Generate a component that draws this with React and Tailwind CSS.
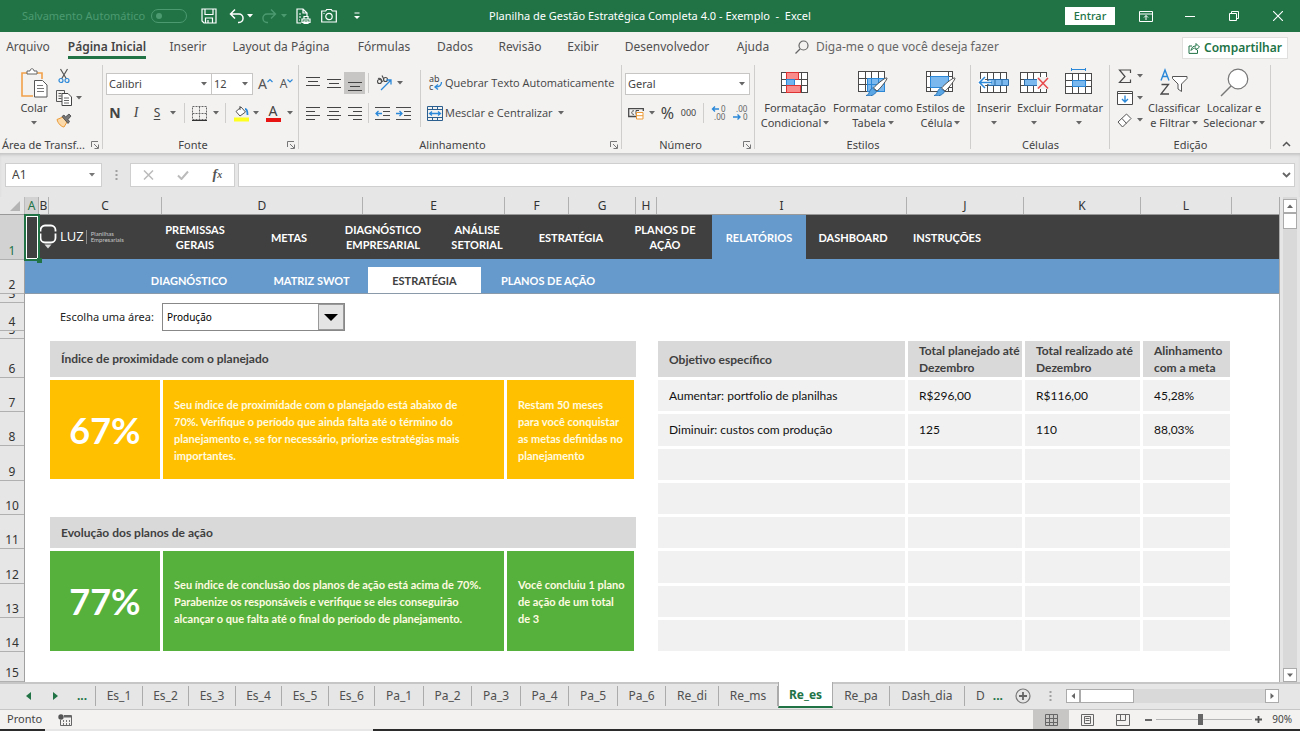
import React from 'react';
import clsx from 'clsx';

const Caret = ({ className = 'text-[#666]' }) => (
  <svg width="6" height="4" viewBox="0 0 6 4" className={clsx('shrink-0', className)}>
    <path d="M0 0h6L3 3.5z" fill="currentColor" />
  </svg>
);

const Svg = ({ w = 16, h = 16, children, className }) => (
  <svg
    width={w}
    height={h}
    viewBox={`0 0 ${w} ${h}`}
    fill="none"
    stroke="#4a4a4a"
    strokeWidth="1"
    className={clsx('shrink-0', className)}
  >
    {children}
  </svg>
);

const IconButton = ({ label, className, children }) => (
  <button type="button" aria-label={label} className={clsx('flex items-center justify-center shrink-0', className)}>
    {children}
  </button>
);

const Separator = ({ className }) => <div className={clsx('w-px shrink-0', className)} />;

/* ---------- title bar ---------- */

const TitleBar = () => (
  <header className="grid h-8 grid-cols-[1fr_auto_1fr] items-center bg-[#217346] text-[11px] text-white">
    <div className="flex items-center pl-[22px]">
      <label htmlFor="autosave" className="w-[129px] whitespace-nowrap text-[#4c9a70]">
        Salvamento Automático
      </label>
      <span className="relative flex h-[14px] w-9 items-center rounded-full border border-[#4c9a70] px-1">
        <input id="autosave" type="checkbox" className="absolute inset-0 opacity-0" />
        <span className="h-[6px] w-[6px] rounded-full bg-[#4c9a70]" />
      </span>
      <IconButton label="Salvar" className="ml-3 w-5">
        <Svg w={16} h={16}>
          <g stroke="#fff" strokeWidth="1.2">
            <path d="M1 1h14v14H3l-2-2z" />
            <path d="M4 1v5.500h8V1M4.500 15v-5h7v5M7 12v3" />
          </g>
        </Svg>
      </IconButton>
      <IconButton label="Desfazer" className="ml-2 w-5">
        <Svg w={16} h={16}>
          <path d="M6 1.500L1.500 6 6 10.500M1.500 6H10a4 4.200 0 0 1 0 8.500H9" stroke="#fff" strokeWidth="1.5" />
        </Svg>
      </IconButton>
      <Caret className="text-white" />
      <IconButton label="Refazer" className="ml-[6px] w-5">
        <Svg w={16} h={16}>
          <path d="M10 1.500L14.500 6 10 10.500M14.500 6H6a4 4.200 0 0 0 0 8.500h1" stroke="#4c9a70" strokeWidth="1.4" />
        </Svg>
      </IconButton>
      <Caret className="ml-[2px] text-[#4c9a70]" />
      <IconButton label="Visualizar impressão" className="w-8">
        <Svg w={16} h={16}>
          <g stroke="#fff" strokeWidth="1.2">
            <path d="M6 15H2V1h6l4 4v3M8 1v4h4" />
            <path d="M4 6h2M4 9h2M4 12h1" />
            <path d="M7 11h8v3.500H7zM9 11V8.500h4V11M9 13h4v2.500H9z" />
          </g>
        </Svg>
      </IconButton>
      <IconButton label="Câmera" className="w-5">
        <Svg w={16} h={16}>
          <g stroke="#fff" strokeWidth="1.2">
            <path d="M.7 3h4l1-1.500h4.600l1 1.500h4v11H.7z" />
            <circle cx="8" cy="8.500" r="3.200" />
            <path d="M2.500 5.500h1" />
          </g>
        </Svg>
      </IconButton>
      <IconButton label="Personalizar barra" className="ml-2 w-5">
        <Svg w={8} h={8}>
          <path d="M1.500 1h5" stroke="#fff" />
          <path d="M1 4h6L4 7z" fill="#fff" stroke="none" />
        </Svg>
      </IconButton>
    </div>
    <h1 className="whitespace-pre">Planilha de Gestão Estratégica Completa 4.0 - Exemplo  -  Excel</h1>
    <div className="flex items-center justify-end">
      <button type="button" className="mr-[9px] h-[18px] w-[50px] bg-white leading-[18px] font-medium text-[#217346]">
        Entrar
      </button>
      <IconButton label="Opções da faixa" className="h-8 w-11">
        <Svg w={14} h={12}>
          <g stroke="#fff">
            <path d="M.5 1.500h13v10H.5zM.5 4h13" />
            <path d="M7 10V5.500M5 7.500l2-2 2 2" />
          </g>
        </Svg>
      </IconButton>
      <IconButton label="Minimizar" className="h-8 w-11">
        <Svg w={10} h={10}>
          <path d="M0 5.500h10" stroke="#fff" />
        </Svg>
      </IconButton>
      <IconButton label="Restaurar" className="h-8 w-11">
        <Svg w={10} h={10}>
          <path d="M.5 2.500h7v7h-7zM2.500 2.500v-2h7v7h-2" stroke="#fff" />
        </Svg>
      </IconButton>
      <IconButton label="Fechar" className="h-8 w-11">
        <Svg w={10} h={10}>
          <path d="M0 0l10 10M10 0L0 10" stroke="#fff" strokeWidth="1.1" />
        </Svg>
      </IconButton>
    </div>
  </header>
);

/* ---------- ribbon tabs ---------- */

const ribbonTabs = [
  { name: 'Arquivo', width: 'w-14' },
  { name: 'Página Inicial', width: 'w-[102px]', active: true },
  { name: 'Inserir', width: 'w-[60px]' },
  { name: 'Layout da Página', width: 'w-[126px]' },
  { name: 'Fórmulas', width: 'w-20' },
  { name: 'Dados', width: 'w-[62px]' },
  { name: 'Revisão', width: 'w-[68px]' },
  { name: 'Exibir', width: 'w-[58px]' },
  { name: 'Desenvolvedor', width: 'w-[110px]' },
  { name: 'Ajuda', width: 'w-[62px]' },
];

const RibbonTabs = () => (
  <nav className="flex h-8 items-center text-xs text-[#505050]">
    {ribbonTabs.map((tab) => (
      <button key={tab.name} type="button" className={clsx('flex h-full shrink-0 justify-center whitespace-nowrap', tab.width)}>
        <span
          className={clsx(
            'h-[27px] pt-1 leading-[22px]',
            tab.active && 'border-b-[3px] border-[#217346] font-semibold text-[#444]'
          )}
        >
          {tab.name}
        </span>
      </button>
    ))}
    <button type="button" className="flex h-full items-start gap-[7px] pl-[11px] text-[#666]">
      <Svg w={14} h={14} className="mt-2">
        <circle cx="8.500" cy="5.500" r="4.500" stroke="#666" strokeWidth="1.2" />
        <path d="M5 9L.5 13.500" stroke="#666" strokeWidth="1.2" />
      </Svg>
      <span className="whitespace-nowrap pt-1 leading-[22px]">Diga-me o que você deseja fazer</span>
    </button>
    <button
      type="button"
      className="ml-auto mr-3 flex h-[22px] w-[106px] items-center justify-center gap-1 border border-[#e1dfdd] bg-white font-semibold text-[#217346]"
    >
      <Svg w={12} h={12}>
        <path d="M4 4H1v7.400h8.500V8M3 8.500C3.500 5.500 5 4 8 4V1.500L11.500 5 8 8V6C6 6 4.500 6.500 3 8.500z" stroke="#217346" />
      </Svg>
      Compartilhar
    </button>
  </nav>
);

/* ---------- ribbon ---------- */

const Launcher = ({ label }) => (
  <IconButton label={`Opções de ${label}`} className="absolute right-1 bottom-1">
    <Svg w={8} h={8}>
      <path d="M.5 6V.5H7M3 3l4 4M7.500 3.500v4h-4" stroke="#777" />
    </Svg>
  </IconButton>
);

const Group = ({ label, launcher, className, children }) => (
  <section
    className={clsx(
      'relative flex shrink-0 flex-col text-[11px] text-[#444]',
      'after:absolute after:top-0 after:right-0 after:bottom-1 after:w-px after:bg-[#d0cecc]',
      className
    )}
  >
    <div className="flex h-[73px] shrink-0">{children}</div>
    <h2 className={clsx('text-center leading-[14px]', launcher && 'pr-4')}>{label}</h2>
    {launcher && <Launcher label={label} />}
  </section>
);

const BigButton = ({ icon, lines, caretBelow, className }) => (
  <button type="button" className={clsx('flex shrink-0 flex-col items-center whitespace-nowrap', className)}>
    <span className="flex h-[35px] items-center">{icon}</span>
    <span className="leading-[15px]">{lines[0]}</span>
    {caretBelow ? (
      <span className="flex h-[15px] items-center">
        <Caret />
      </span>
    ) : (
      <span className="flex items-center gap-[2px] leading-[15px]">
        {lines[1]} <Caret />
      </span>
    )}
  </button>
);

const GridBase = () => (
  <>
    <rect x=".5" y="2.500" width="26" height="20" fill="#fff" />
    <path d="M7.500 2.500v20M20.500 2.500v20M.5 9.500h26M.5 15.500h26M13.500 2.500v20" />
  </>
);

const Brush = () => (
  <>
    <path d="M8 26.500c3.500 0 2.500-5 6.500-7.500l4 3.500c-2 4-6.500 5-10.500 4z" fill="#5aa5e4" stroke="#2673b8" />
    <path d="M29 9c.8.800-6.500 10.500-10 13l-3.500-3C19 15 27.500 8 29 9z" fill="#fff" stroke="#555" />
  </>
);

const PasteIcon = () => (
  <Svg w={28} h={30}>
    <path d="M7 5H2v23h11M17 5h5v6" stroke="#f2a04a" strokeWidth="1.6" />
    <path d="M7 6V3h3c0-3 4-3 4 0h3v3z" fill="#fff" stroke="#666" />
    <path d="M14.500 12.500h8l4.500 4.500v12H14.500z" fill="#fff" stroke="#555" />
    <path d="M17 17.500h6M17 20.500h7M17 23.500h7" stroke="#777" />
  </Svg>
);

const AlignIcon = ({ rows }) => (
  <Svg w={14} h={15}>
    {rows.map(([x1, x2, y]) => (
      <path key={y} d={`M${x1} ${y}H${x2}`} stroke="#444" />
    ))}
  </Svg>
);

const alignTop = [[0, 14, 1.5], [2, 12, 5.5], [0, 14, 9.5]];
const alignMiddle = [[0, 14, 3.5], [2, 12, 7.5], [0, 14, 11.5]];
const alignBottom = [[0, 14, 6.5], [2, 12, 10.5], [0, 14, 14.5]];
const alignLeft = [[0, 14, 1.5], [0, 9, 5.5], [0, 14, 9.5], [0, 9, 13.5]];
const alignCenter = [[0, 14, 1.5], [2, 12, 5.5], [0, 14, 9.5], [2, 12, 13.5]];
const alignRight = [[0, 14, 1.5], [5, 14, 5.5], [0, 14, 9.5], [5, 14, 13.5]];

const IndentIcon = ({ back }) => (
  <Svg w={15} h={13}>
    <path d="M0 .5h15M8 4.500h7M8 8.500h7M0 12.500h15" />
    <path d={back ? 'M7 6.500H1M3.500 4L1 6.500 3.500 9' : 'M0 6.500h6M3.500 4L6 6.500 3.500 9'} stroke="#2b88d8" strokeWidth="1.3" />
  </Svg>
);

const DecimalIcon = ({ more }) => (
  <Svg w={16} h={16}>
    <g fill="#666" stroke="none" fontSize="8" fontFamily="Noto Sans">
      <text x={more ? 10 : 4} y="7">{more ? '0' : '.00'}</text>
      <text x={more ? 3 : 11} y="15">{more ? '.00' : '0'}</text>
    </g>
    <path
      d={more ? 'M8 4H1.500M4 1.500L1.500 4 4 6.500' : 'M1 12h7M5.500 9.500L8 12l-2.500 2.500'}
      stroke="#2b88d8"
      strokeWidth="1.4"
    />
  </Svg>
);

const ComboBox = ({ label, value, className }) => (
  <span className={clsx('relative flex h-[22px] shrink-0 items-center border border-[#c8c6c4] bg-white', className)}>
    <select aria-label={label} defaultValue={value} className="h-full w-full appearance-none pl-[2px] text-[11px] text-[#444] outline-none">
      <option>{value}</option>
    </select>
    <Caret className="pointer-events-none absolute right-1 text-[#666]" />
  </span>
);

const ClipboardGroup = () => (
  <Group label="Área de Transf..." launcher className="w-[103px]">
    <BigButton className="ml-[14px] w-10" icon={<PasteIcon />} lines={['Colar']} caretBelow />
    <div className="flex flex-col">
      <IconButton label="Recortar" className="h-[22px] w-5">
        <Svg w={12} h={16}>
          <path d="M2.500 1L8.500 11M9.500 1L3.500 11" stroke="#555" strokeWidth="1.2" />
          <circle cx="3" cy="12.500" r="2" stroke="#2b88d8" strokeWidth="1.2" />
          <circle cx="9" cy="12.500" r="2" stroke="#2b88d8" strokeWidth="1.2" />
        </Svg>
      </IconButton>
      <div className="flex h-[22px] items-center gap-[2px]">
        <IconButton label="Copiar" className="w-5">
          <Svg w={16} h={16}>
            <path d="M.5.5h8v11h-8zM2.500 3.500h3M2.500 6h3M2.500 8.500h3" stroke="#555" />
            <path d="M6 3.500h6l3.500 3.500v8.500H6z" fill="#fff" stroke="#444" />
            <path d="M8 8h5M8 10.500h5M8 13h5" stroke="#666" />
          </Svg>
        </IconButton>
        <Caret />
      </div>
      <IconButton label="Pincel de formatação" className="h-[22px] w-5">
        <Svg w={16} h={15}>
          <path d="M1 6.500L7 4l4 5-3 5C6 14 2 11 1 6.500z" fill="#fbd9a8" stroke="#ed9a36" />
          <path d="M6 3.500l6 7 1.500-2L12 6.500 15 3 13 1 9.500 4 8 2z" fill="#777" stroke="#444" strokeWidth=".8" />
        </Svg>
      </IconButton>
    </div>
  </Group>
);

const FontGroup = () => (
  <Group label="Fonte" launcher className="w-[196px]">
    <div className="flex flex-col pl-[3px]">
      <div className="mt-2 flex items-center">
        <ComboBox label="Fonte" value="Calibri" className="w-[106px]" />
        <ComboBox label="Tamanho da fonte" value="12" className="w-[41px] border-l-0" />
        <IconButton label="Aumentar fonte" className="ml-[2px] w-[21px] text-sm text-[#555]">
          A<Svg w={6} h={12}><path d="M.5 4L3 1.500 5.500 4" stroke="#2b88d8" strokeWidth="1.2" /></Svg>
        </IconButton>
        <IconButton label="Diminuir fonte" className="w-[21px] text-xs text-[#555]">
          A<Svg w={6} h={12}><path d="M.5 1.500L3 4l2.500-2.500" stroke="#2b88d8" strokeWidth="1.2" /></Svg>
        </IconButton>
      </div>
      <div className="mt-2 flex h-5 items-center text-sm">
        <IconButton label="Negrito" className="w-[18px] font-bold">N</IconButton>
        <IconButton label="Itálico" className="w-6 font-['Liberation_Serif',serif] italic">I</IconButton>
        <IconButton label="Sublinhado" className="w-[18px] text-xs underline underline-offset-2">S</IconButton>
        <IconButton label="Mais sublinhados" className="w-[14px]"><Caret /></IconButton>
        <Separator className="mx-1 h-5 bg-[#d0cecc]" />
        <IconButton label="Bordas" className="w-[21px]">
          <Svg w={15} h={15}>
            <path d="M.5.5h14v13H.5zM7.500.5v13M.5 7.500h14" stroke="#666" strokeDasharray="2 1" />
            <path d="M0 14.500h15" stroke="#333" />
          </Svg>
        </IconButton>
        <IconButton label="Mais bordas" className="w-[11px]"><Caret /></IconButton>
        <Separator className="mx-1 h-5 bg-[#d0cecc]" />
        <IconButton label="Cor de preenchimento" className="w-[22px]">
          <Svg w={17} h={17}>
            <path d="M3 6.500L8 2l4.500 5L7 11z" fill="#fff" stroke="#555" />
            <path d="M7 1v4" stroke="#555" />
            <path d="M12 4c2 0 2.500 3 2.500 6" stroke="#2b88d8" strokeWidth="1.8" />
            <rect x="1" y="12.500" width="15" height="4" fill="#ffff1f" stroke="none" />
          </Svg>
        </IconButton>
        <IconButton label="Mais cores de preenchimento" className="w-2"><Caret /></IconButton>
        <IconButton label="Cor da fonte" className="w-[26px] flex-col">
          <span className="leading-[14px]">A</span>
          <span className="h-1 w-[15px] bg-[#e81313]" />
        </IconButton>
        <IconButton label="Mais cores da fonte" className="w-2"><Caret /></IconButton>
      </div>
    </div>
  </Group>
);

const AlignmentGroup = () => (
  <Group label="Alinhamento" launcher className="w-[323px]">
    <div className="flex flex-col pl-[3px]">
      <div className="mt-[7px] flex h-[22px] items-center">
        <IconButton label="Alinhar em cima" className="h-full w-[21px]"><AlignIcon rows={alignTop} /></IconButton>
        <IconButton label="Alinhar no meio" className="h-full w-[21px]"><AlignIcon rows={alignMiddle} /></IconButton>
        <IconButton label="Alinhar embaixo" className="h-full w-[21px] bg-[#c8c6c4]"><AlignIcon rows={alignBottom} /></IconButton>
        <Separator className="mx-[3px] h-5 bg-[#d0cecc]" />
        <IconButton label="Orientação" className="w-6">
          <Svg w={17} h={16}>
            <g strokeWidth="1.100">
              <circle cx="3.500" cy="6.500" r="2" />
              <path d="M2 3.500c2-1 3.500.5 4.500 3.500" />
              <circle cx="9.500" cy="4.500" r="2" />
              <path d="M6 .5l2 4" />
            </g>
            <path d="M5 15L14.500 5.500M10.500 5h4.500v4.500" stroke="#2b88d8" strokeWidth="1.3" />
          </Svg>
        </IconButton>
        <IconButton label="Mais orientações" className="w-2"><Caret /></IconButton>
      </div>
      <div className="mt-[9px] flex h-5 items-center">
        <IconButton label="Alinhar à esquerda" className="w-[21px]"><AlignIcon rows={alignLeft} /></IconButton>
        <IconButton label="Centralizar" className="w-[21px]"><AlignIcon rows={alignCenter} /></IconButton>
        <IconButton label="Alinhar à direita" className="w-[21px]"><AlignIcon rows={alignRight} /></IconButton>
        <Separator className="mx-[3px] h-5 bg-[#d0cecc]" />
        <IconButton label="Diminuir recuo" className="w-[21px]"><IndentIcon back /></IconButton>
        <IconButton label="Aumentar recuo" className="w-[21px]"><IndentIcon /></IconButton>
      </div>
    </div>
    <Separator className="mt-[5px] ml-[6px] h-[57px] bg-[#d0cecc]" />
    <div className="flex flex-col pl-[6px]">
      <button type="button" className="mt-[7px] flex h-[22px] items-center gap-[2px] font-['Open_Sans',sans-serif] whitespace-nowrap">
        <Svg w={16} h={16}>
          <g fontSize="9" fill="#444" stroke="none" fontFamily="Noto Sans">
            <text x="2" y="7">ab</text>
            <text x="2" y="15">c</text>
          </g>
          <path d="M14.500 7c0 4-2 5-6 5M11 9.500L8 12l3 2.500" stroke="#2b88d8" strokeWidth="1.3" />
        </Svg>
        Quebrar Texto Automaticamente
      </button>
      <div className="mt-[9px] flex h-5 items-center">
        <button type="button" className="flex items-center gap-[2px] font-['Open_Sans',sans-serif] whitespace-nowrap">
          <Svg w={16} h={15}>
            <path d="M.5.5h15v14H.5zM.5 3.500h15M.5 11.500h15M5.500.5v3M10.500.5v3M5.500 11.500v3M10.500 11.500v3" stroke="#2a5f8f" />
            <path d="M2.500 7.500h11M5 5.500l-2.500 2L5 9.500M11 5.500l2.500 2-2.500 2" stroke="#2b88d8" strokeWidth="1.3" />
          </Svg>
          Mesclar e Centralizar
        </button>
        <IconButton label="Mais opções de mesclagem" className="w-4"><Caret /></IconButton>
      </div>
    </div>
  </Group>
);

const NumberGroup = () => (
  <Group label="Número" launcher className="w-[133px]">
    <div className="flex flex-col pl-[3px]">
      <ComboBox label="Formato do número" value="Geral" className="mt-2 w-[125px]" />
      <div className="mt-2 flex h-5 items-center">
        <IconButton label="Formato de contabilização" className="w-[22px]">
          <Svg w={16} h={14}>
            <path d="M8 10.500H.7V2.700h14.600V5" strokeWidth="1.3" />
            <path d="M6 4.800c-3-.5-3 4 0 3.600M8 8.500v-4h3" />
            <path d="M8.500 6.500h6.500v6.500H8.500zM8.500 9.700h6.500" fill="#fff" stroke="#ed9a36" />
          </Svg>
        </IconButton>
        <IconButton label="Mais formatos" className="w-[10px]"><Caret /></IconButton>
        <IconButton label="Porcentagem" className="w-[21px] text-base">%</IconButton>
        <IconButton label="Separador de milhares" className="w-[21px] text-[9px]">000</IconButton>
        <Separator className="mx-1 h-5 bg-[#d0cecc]" />
        <IconButton label="Aumentar casas decimais" className="w-[21px]"><DecimalIcon more /></IconButton>
        <IconButton label="Diminuir casas decimais" className="w-[21px]"><DecimalIcon /></IconButton>
      </div>
    </div>
  </Group>
);

const StylesGroup = () => (
  <Group label="Estilos" className="w-[216px]">
    <BigButton
      className="w-20"
      lines={['Formatação', 'Condicional']}
      icon={
        <Svg w={28} h={25}>
          <GridBase />
          <rect x="5.500" y="2.500" width="12" height="7" fill="#f98b8b" stroke="#d33" />
          <rect x="5.500" y="9.500" width="8" height="6" fill="#6fb4ee" stroke="#2b88d8" />
          <rect x="5.500" y="15.500" width="14" height="7" fill="#f98b8b" stroke="#d33" />
        </Svg>
      }
    />
    <BigButton
      className="w-[76px]"
      lines={['Formatar como', 'Tabela']}
      icon={
        <Svg w={30} h={27}>
          <GridBase />
          <path d="M9.500 9.500h17v13h-17z" fill="#7ab8ee" stroke="#2b88d8" />
          <path d="M13.500 9.500v13M20.500 9.500v13M9.500 15.500h17" stroke="#2b88d8" />
          <Brush />
        </Svg>
      }
    />
    <BigButton
      className="w-[59px]"
      lines={['Estilos de', 'Célula']}
      icon={
        <Svg w={30} h={27}>
          <rect x=".5" y="2.500" width="26" height="20" fill="#fff" />
          <path d="M4.500 2.500v20M22.500 2.500v20M.5 7.500h26M.5 18.500h26" />
          <path d="M4.500 7.500h18v11h-18z" fill="#7ab8ee" stroke="#2b88d8" />
          <Brush />
        </Svg>
      }
    />
  </Group>
);

const CellsGroup = () => (
  <Group label="Células" className="w-[139px]">
    <BigButton
      className="ml-[3px] w-10"
      lines={['Inserir']}
      caretBelow
      icon={
        <Svg w={32} h={25}>
          <g transform="translate(2 0)"><GridBase /></g>
          <path d="M10.500 9.500h20v6h-20zM17 9.500v6M24 9.500v6" fill="#7ab8ee" stroke="#2b6ca8" />
          <path d="M13 12.500H1.500M7 7l-5.500 5.500L7 18" stroke="#fff" strokeWidth="3.500" />
          <path d="M14 12.500H1.500M7 7l-5.500 5.500L7 18" stroke="#2b88d8" strokeWidth="1.500" />
        </Svg>
      }
    />
    <BigButton
      className="w-10"
      lines={['Excluir']}
      caretBelow
      icon={
        <Svg w={29} h={25}>
          <GridBase />
          <path d="M4.500 9.500h14v6h-14z" fill="#7ab8ee" stroke="#2b6ca8" />
          <path d="M17 7h12v12H17z" fill="#f3f2f1" stroke="none" />
          <path d="M18 8l10 10.500M28 8L18 18.500" stroke="#e8494a" strokeWidth="1.500" />
        </Svg>
      }
    />
    <BigButton
      className="w-[50px]"
      lines={['Formatar']}
      caretBelow
      icon={
        <Svg w={28} h={30}>
          <g transform="translate(0 3)"><GridBase /></g>
          <path d="M7.500 12.500h13v6h-13z" fill="#7ab8ee" stroke="#2b88d8" />
          <path d="M6.500 1.500h14M6.500 0v3M20.500 0v3" stroke="#2b88d8" />
        </Svg>
      }
    />
  </Group>
);

const EditingGroup = () => (
  <Group label="Edição" className="w-[161px]">
    <div className="flex w-[33px] flex-col pl-[6px]">
      <div className="flex h-[22px] items-center gap-1">
        <IconButton label="AutoSoma" className="w-[17px]">
          <Svg w={14} h={15}><path d="M12.500 4V1H1.500l5.500 6.500-5.500 6h11v-3" strokeWidth="1.2" /></Svg>
        </IconButton>
        <Caret />
      </div>
      <div className="flex h-[22px] items-center gap-1">
        <IconButton label="Preencher" className="w-[17px]">
          <Svg w={16} h={14}>
            <path d="M.5.5h15v13H.5z" fill="#fff" />
            <path d="M.5 2.500h15" />
            <path d="M8 4.500v6.500M5 8l3 3 3-3" stroke="#2b88d8" strokeWidth="1.4" />
          </Svg>
        </IconButton>
        <Caret />
      </div>
      <div className="flex h-[22px] items-center gap-1">
        <IconButton label="Limpar" className="w-[17px]">
          <Svg w={16} h={15}>
            <path d="M1 9l8.500-8L14 5.500 5.500 14zM5 5.500l4.500 5" fill="#fff" stroke="#555" />
          </Svg>
        </IconButton>
        <Caret />
      </div>
    </div>
    <BigButton
      className="w-[62px]"
      lines={['Classificar', 'e Filtrar']}
      icon={
        <Svg w={28} h={29}>
          <path d="M1 12.500L5 2l4 10.500M2.500 8.500h5" stroke="#2b88d8" strokeWidth="1.400" />
          <path d="M1.500 16.500h7l-7.500 9.500h8" strokeWidth="1.300" />
          <path d="M12.500 8.500h14.500v2L21.500 16v7.500L18 21v-5l-5.500-5.500z" fill="#fff" stroke="#555" />
        </Svg>
      }
    />
    <BigButton
      className="w-[58px]"
      lines={['Localizar e', 'Selecionar']}
      icon={
        <Svg w={29} h={29}>
          <circle cx="18" cy="11" r="9.800" fill="#fff" stroke="#777" strokeWidth="1.200" />
          <path d="M11 18L1 28" stroke="#777" strokeWidth="1.400" />
        </Svg>
      }
    />
  </Group>
);

const Ribbon = () => (
  <div className="flex h-[89px] pt-px">
    <ClipboardGroup />
    <FontGroup />
    <AlignmentGroup />
    <NumberGroup />
    <StylesGroup />
    <CellsGroup />
    <EditingGroup />
    <IconButton label="Recolher faixa" className="ml-auto mr-[9px] flex-col self-end pb-[6px]">
      <Svg w={9} h={6}>
        <path d="M1 5l3.500-3.500L8 5" stroke="#555" strokeWidth="1.500" />
      </Svg>
    </IconButton>
  </div>
);

/* ---------- formula bar ---------- */

const Dots = () => (
  <Svg w={3} h={12}>
    <path d="M1.500 1v10" stroke="#a0a0a0" strokeWidth="2" strokeDasharray="2 2" />
  </Svg>
);

const FormulaBar = () => (
  <div className="flex h-11 items-center bg-[#e6e6e6] pr-[5px] pl-[5px] shadow-[inset_0_3px_3px_-1px_#c4c4c4]">
    <div className="relative flex h-6 w-[97px] items-center border border-[#cfcfcf] bg-white">
      <input aria-label="Caixa de nome" defaultValue="A1" className="w-full pl-[6px] text-xs text-[#444] outline-none" />
      <Caret className="absolute right-[6px] text-[#777]" />
    </div>
    <div className="flex w-7 justify-center"><Dots /></div>
    <div className="flex h-6 w-[105px] items-center justify-around border border-[#cfcfcf] bg-white">
      <IconButton label="Cancelar">
        <Svg w={11} h={10}><path d="M1 .5l9 9M10 .5l-9 9" stroke="#bbb" strokeWidth="1.500" /></Svg>
      </IconButton>
      <IconButton label="Inserir">
        <Svg w={12} h={10}><path d="M1 5.500L4.500 9 11 1.500" stroke="#bbb" strokeWidth="2" /></Svg>
      </IconButton>
      <IconButton label="Inserir função" className="font-['Liberation_Serif',serif] text-sm font-bold italic leading-none text-[#555]">
        f<span className="text-[10px]">x</span>
      </IconButton>
    </div>
    <div className="ml-[3px] flex h-6 flex-1 items-center border border-[#cfcfcf] bg-white">
      <input aria-label="Barra de fórmulas" className="h-full flex-1 px-2 text-xs outline-none" />
      <Svg w={9} h={6} className="mr-[3px]"><path d="M1 1l3.500 3.500L8 1" stroke="#666" strokeWidth="1.800" /></Svg>
    </div>
  </div>
);

/* ---------- sheet ---------- */

const columns = [
  { name: 'A', width: 'w-[14px]', active: true },
  { name: 'B', width: 'w-[10px]' },
  { name: 'C', width: 'w-[113px]' },
  { name: 'D', width: 'w-[201px]' },
  { name: 'E', width: 'w-[142px]' },
  { name: 'F', width: 'w-[64px]' },
  { name: 'G', width: 'w-[67px]' },
  { name: 'H', width: 'w-[21px]' },
  { name: 'I', width: 'w-[250px]' },
  { name: 'J', width: 'w-[117px]' },
  { name: 'K', width: 'w-[117px]' },
  { name: 'L', width: 'w-[91px]' },
];

// rows 3 and 5 are too short for their numbers, which are clipped
const rows = [
  { name: 1, height: 'h-[45px]', active: true },
  { name: 2, height: 'h-[34px]' },
  { name: 3, height: 'h-[9px]' },
  { name: 4, height: 'h-7' },
  { name: 5, height: 'h-2' },
  { name: 6, height: 'h-[39px]' },
  { name: 7, height: 'h-[34px]' },
  { name: 8, height: 'h-[34px]' },
  { name: 9, height: 'h-[35px]' },
  { name: 10, height: 'h-[34px]' },
  { name: 11, height: 'h-[34px]' },
  { name: 12, height: 'h-[35px]' },
  { name: 13, height: 'h-[34px]' },
  { name: 14, height: 'h-[34px]' },
  { name: 15, height: 'h-[30px]' },
];

const ColumnHeaders = () => (
  <div className="flex h-[18px] border-b border-[#999] text-xs text-[#333]">
    <div className="flex w-[25px] shrink-0 items-end justify-end border-r border-[#bbb] pr-1 pb-[3px]">
      <Svg w={10} h={10}><path d="M10 0v10H0z" fill="#b4b4b4" stroke="none" /></Svg>
    </div>
    {columns.map((col) => (
      <div
        key={col.name}
        className={clsx(
          'flex shrink-0 justify-center border-r border-[#b0b0b0] leading-[18px]',
          col.width,
          col.active && 'bg-[#d2d2d2] text-[#217346]'
        )}
      >
        {col.name}
      </div>
    ))}
  </div>
);

const RowHeaders = () => (
  <div className="w-[25px] shrink-0 border-r border-[#a0a0a0] text-xs text-[#333]">
    {rows.map((row) => (
      <div
        key={row.name}
        className={clsx(
          'flex items-end justify-center overflow-hidden border-b border-[#b0b0b0] leading-4',
          row.height,
          row.active && 'bg-[#d2d2d2] text-[#217346]'
        )}
      >
        {row.name}
      </div>
    ))}
  </div>
);

const navItems = [
  'PREMISSAS GERAIS',
  'METAS',
  'DIAGNÓSTICO EMPRESARIAL',
  'ANÁLISE SETORIAL',
  'ESTRATÉGIA',
  'PLANOS DE AÇÃO',
  'RELATÓRIOS',
  'DASHBOARD',
  'INSTRUÇÕES',
];

const subNavItems = [
  { name: 'DIAGNÓSTICO', width: 'w-[132px]' },
  { name: 'MATRIZ SWOT', width: 'w-[113px]' },
  { name: 'ESTRATÉGIA', width: 'w-[113px]', active: true },
  { name: 'PLANOS DE AÇÃO', width: 'w-[134px]' },
];

const Logo = () => (
  <div className="flex w-[123px] shrink-0 items-center pl-[14px] font-normal text-white">
    <Svg w={18} h={26}>
      <path d="M1.500 7.500V6a4.500 4.500 0 0 1 4.500-4.500h6A4.500 4.500 0 0 1 16.500 6v1.500M1.500 9.500V14A4.500 4.500 0 0 0 6 18.500h6a4.500 4.500 0 0 0 4.500-4.500V9.500" stroke="#fff" strokeWidth="1.800" />
      <path d="M5.500 20.500h7L9 24.500z" fill="#ddd" stroke="none" />
    </Svg>
    <span className="ml-[3px] font-['Open_Sans',sans-serif] text-[13px]">LUZ</span>
    <span className="ml-[2px] h-[14px] w-px bg-[#8a8a8a]" />
    <span className="ml-1 text-[6px] leading-[6px] text-[#c8c8c8]">
      Planilhas
      <br />
      Empresariais
    </span>
  </div>
);

const SheetNav = () => (
  <div className="relative text-[11px] font-bold text-white">
    <div className="flex h-11 bg-[#404040]">
      <Logo />
      {navItems.map((item) => (
        <a
          key={item}
          href="#nav"
          className={clsx(
            'flex w-[94px] shrink-0 items-center justify-center px-1 text-center leading-[15px]',
            item === 'RELATÓRIOS' && 'bg-[#6699cc]'
          )}
        >
          {item}
        </a>
      ))}
    </div>
    <div className="flex h-[35px] items-end border-b border-[#8a9aab] bg-[#6699cc] pl-[98px]">
      {subNavItems.map((item) => (
        <a
          key={item.name}
          href="#sub"
          className={clsx(
            'flex h-[26px] shrink-0 items-center justify-center pt-[2px]',
            item.width,
            item.active && 'bg-white text-[#404040]'
          )}
        >
          {item.name}
        </a>
      ))}
    </div>
    {/* selection on A1 */}
    <div className="absolute -top-px -left-px h-[47px] w-4 border-2 border-[#217346]">
      <div className="h-full border border-white" />
      <div className="absolute -right-1 -bottom-1 h-[5px] w-[5px] bg-[#217346]" />
    </div>
  </div>
);

const ScoreCard = ({ title, score, message, note, color, titleHeight, boxHeight }) => (
  <section className="w-[586px]">
    <h3 className={clsx('flex items-center bg-[#d9d9d9] pl-[11px] text-xs font-bold text-[#404040]', titleHeight)}>{title}</h3>
    <div className="mt-[3px] flex gap-[3px] text-[11px] leading-[17px] font-bold">
      <div className={clsx('flex w-[110px] items-center justify-center text-4xl text-white', boxHeight, color)}>{score}</div>
      <p className={clsx('flex w-[341px] items-center pl-[11px] whitespace-pre-line text-[#fffbe0]', boxHeight, color)}>{message}</p>
      <p className={clsx('flex w-[127px] items-center pl-[11px] whitespace-pre-line text-[#fffbe0]', boxHeight, color)}>{note}</p>
    </div>
  </section>
);

const goals = [
  ['Aumentar: portfolio de planilhas', 'R$296,00', 'R$116,00', '45,28%'],
  ['Diminuir: custos com produção', '125', '110', '88,03%'],
  ['', '', '', ''],
  ['', '', '', ''],
  ['', '', '', ''],
  ['', '', '', ''],
  ['', '', '', ''],
  ['', '', '', ''],
];

const headCell = 'border-r-[3px] border-b-[3px] border-white bg-[#d9d9d9] pl-[11px] text-left font-bold';

const GoalsTable = () => (
  <table className="h-[313px] w-[575px] shrink-0 table-fixed border-separate border-spacing-0 text-xs leading-[17px] text-[#404040]">
    <thead>
      <tr className="h-[39px]">
        <th className={clsx(headCell, 'w-[250px]')}>Objetivo específico</th>
        <th className={clsx(headCell, 'w-[117px]')}>Total planejado até Dezembro</th>
        <th className={clsx(headCell, 'w-[118px]')}>Total realizado até Dezembro</th>
        <th className={clsx(headCell, 'w-[90px]')}>Alinhamento com a meta</th>
      </tr>
    </thead>
    <tbody>
      {goals.map((goal, i) => (
        <tr key={i} className="h-[34px]">
          {goal.map((value, j) => (
            <td key={j} className="border-r-[3px] border-b-[3px] border-white bg-[#f1f1f1] pl-[11px] text-[#111]">
              {value}
            </td>
          ))}
        </tr>
      ))}
    </tbody>
  </table>
);

const SheetBody = () => (
  <main className="min-w-0 flex-1 bg-white font-['Lato',sans-serif]">
    <SheetNav />
    <div className="mt-[9px] flex items-center pl-[35px]">
      <label htmlFor="area" className="w-[102px] font-['Noto_Sans',sans-serif] text-[11px] whitespace-nowrap text-[#222]">
        Escolha uma área:
      </label>
      <span className="relative flex h-7 w-[183px] border border-[#888]">
        <select
          id="area"
          defaultValue="Produção"
          className="w-full appearance-none pl-1 font-['Noto_Sans',sans-serif] text-[10px] text-black outline-none"
        >
          <option>Produção</option>
        </select>
        <span className="pointer-events-none absolute inset-y-0 right-0 flex w-[26px] items-center justify-center border border-[#999] bg-[#e4e4e4]">
          <Svg w={14} h={7}><path d="M0 0h14L7 7z" fill="#000" stroke="none" /></Svg>
        </span>
      </span>
    </div>
    <div className="mt-[10px] flex gap-[22px] pl-[25px]">
      <div className="flex flex-col gap-[38px]">
        <ScoreCard
          title="Índice de proximidade com o planejado"
          score="67%"
          color="bg-[#ffc000]"
          titleHeight="h-9"
          boxHeight="h-[99px]"
          message={
            'Seu índice de proximidade com o planejado está abaixo de\n' +
            '70%. Verifique o período que ainda falta até o término do\n' +
            'planejamento e, se for necessário, priorize estratégias mais\n' +
            'importantes.'
          }
          note={'Restam 50 meses\npara você conquistar\nas metas definidas no\nplanejamento'}
        />
        <ScoreCard
          title="Evolução dos planos de ação"
          score="77%"
          color="bg-[#55b03c]"
          titleHeight="h-[31px]"
          boxHeight="h-[100px]"
          message={
            'Seu índice de conclusão dos planos de ação está acima de 70%.\n' +
            'Parabenize os responsáveis e verifique se eles conseguirão\n' +
            'alcançar o que falta até o final do período de planejamento.'
          }
          note={'Você concluiu 1 plano\nde ação de um total\nde 3'}
        />
      </div>
      <GoalsTable />
    </div>
  </main>
);

const ArrowBox = ({ label, path, className }) => (
  <IconButton label={label} className={clsx('h-[14px] w-[14px] border border-[#ababab] bg-white', className)}>
    <Svg w={8} h={8}><path d={path} fill="#666" stroke="none" /></Svg>
  </IconButton>
);

const Sheet = () => (
  <div className="flex flex-1 border-b-2 border-[#c6c6c6] bg-[#e6e6e6]">
    <div className="flex min-w-0 flex-1 flex-col border-r border-[#ababab]">
      <ColumnHeaders />
      <div className="flex flex-1">
        <RowHeaders />
        <SheetBody />
      </div>
    </div>
    <div className="mr-[3px] ml-[3px] flex w-[14px] flex-col bg-[#d9d9d9] pt-[2px]">
      <ArrowBox label="Rolar para cima" path="M1 6h6L4 2.500z" />
      <div className="h-4 border border-[#ababab] bg-white" />
      <ArrowBox label="Rolar para baixo" path="M1 2.500h6L4 6z" className="mt-auto" />
    </div>
  </div>
);

/* ---------- bottom bars ---------- */

const sheetTabs = [
  { name: 'Es_1', width: 'w-[47px]' },
  { name: 'Es_2', width: 'w-[46px]' },
  { name: 'Es_3', width: 'w-[47px]' },
  { name: 'Es_4', width: 'w-[46px]' },
  { name: 'Es_5', width: 'w-[47px]' },
  { name: 'Es_6', width: 'w-[46px]' },
  { name: 'Pa_1', width: 'w-[49px]' },
  { name: 'Pa_2', width: 'w-[48px]' },
  { name: 'Pa_3', width: 'w-[49px]' },
  { name: 'Pa_4', width: 'w-[48px]' },
  { name: 'Pa_5', width: 'w-[49px]' },
  { name: 'Pa_6', width: 'w-[48px]' },
  { name: 'Re_di', width: 'w-[53px]' },
  { name: 'Re_ms', width: 'w-[59px]' },
  { name: 'Re_es', width: 'w-[55px]', active: true },
  { name: 'Re_pa', width: 'w-[57px]' },
  { name: 'Dash_dia', width: 'w-[75px]' },
];

const SheetTabs = () => (
  <div className="flex h-[25px] items-start bg-[#e6e6e6] text-xs text-[#505050]">
    <IconButton label="Planilha anterior" className="ml-[18px] h-6 w-5">
      <Svg w={5} h={8}><path d="M5 0v8L0 4z" fill="#217346" stroke="none" /></Svg>
    </IconButton>
    <IconButton label="Próxima planilha" className="ml-[7px] h-6 w-5">
      <Svg w={5} h={8}><path d="M0 0v8l5-4z" fill="#217346" stroke="none" /></Svg>
    </IconButton>
    <button type="button" className="h-6 w-[30px] pl-1 font-bold text-[#217346]">...</button>
    <Separator className="mt-[2px] h-5 bg-[#ababab]" />
    {sheetTabs.map((tab) => (
      <button
        key={tab.name}
        type="button"
        className={clsx(
          'shrink-0 border-[#ababab]',
          tab.width,
          tab.active
            ? '-mt-[2px] h-[26px] border-x border-b-2 border-b-[#217346] bg-white pt-[2px] font-bold text-[#217346]'
            : 'mt-[2px] h-5 border-r'
        )}
      >
        {tab.name}
      </button>
    ))}
    <span className="flex h-6 w-10 items-center gap-2 pl-[11px]">
      D <span className="font-bold text-[#217346]">...</span>
    </span>
    <IconButton label="Nova planilha" className="ml-[10px] h-6 w-4">
      <Svg w={16} h={16}>
        <circle cx="8" cy="8" r="7" stroke="#777" strokeWidth="1.200" />
        <path d="M8 4v8M4 8h8" stroke="#666" strokeWidth="1.800" />
      </Svg>
    </IconButton>
    <div className="ml-auto flex h-6 items-center">
      <Dots />
      <div className="mr-[21px] ml-[14px] flex h-[14px] w-[213px] bg-[#d9d9d9]">
        <ArrowBox label="Rolar para a esquerda" path="M6 1v6L2.500 4z" />
        <div className="h-full w-[54px] border border-[#ababab] bg-white" />
        <ArrowBox label="Rolar para a direita" path="M2.500 1v6L6 4z" className="ml-auto" />
      </div>
    </div>
  </div>
);

const StatusBar = () => (
  <footer className="flex h-5 items-center border-t border-[#c6c6c6] bg-[#f3f2f1] text-[11px] text-[#444]">
    <span className="w-[58px] pl-[7px]">Pronto</span>
    <IconButton label="Gravar macro">
      <Svg w={14} h={12}>
        <path d="M6 1.500h7.500v10h-11V6" stroke="#666" />
        <path d="M6 2.500h7" stroke="#666" strokeWidth="2" />
        <circle cx="3" cy="3" r="2.700" fill="#555" stroke="none" />
        <path d="M5.500 6v5M8.500 6v5M11.500 6v5" stroke="#777" strokeDasharray="2 1" />
      </Svg>
    </IconButton>
    <div className="ml-auto flex h-full items-center">
      <IconButton label="Normal" className="h-full w-9 bg-[#c8c6c4]">
        <Svg w={13} h={12}>
          <path d="M.5.5h12v11H.5zM4.500.5v11M8.500.5v11M.5 4.500h12M.5 8.500h12" stroke="#666" />
        </Svg>
      </IconButton>
      <IconButton label="Layout da página" className="h-full w-9">
        <Svg w={13} h={12}>
          <path d="M.5.5h12v11H.5zM3.500 2.500h6v7h-6zM4.500 4.500h4M4.500 6.500h4" stroke="#666" />
        </Svg>
      </IconButton>
      <IconButton label="Quebra de página" className="h-full w-9">
        <Svg w={14} h={12}>
          <path d="M.5.5h13v11H.5zM4.500.5v6M9.500.5v6h-9" stroke="#666" />
        </Svg>
      </IconButton>
      <button type="button" aria-label="Menos zoom" className="ml-1 h-0.5 w-[7px] bg-[#666]" />
      <span className="relative ml-1 flex h-3 w-[96px] items-center">
        <input type="range" aria-label="Zoom" defaultValue="45" className="absolute inset-0 w-full opacity-0" />
        <span className="h-px w-full bg-[#b5b5b5]" />
        <span className="absolute left-[42px] h-[11px] w-[5px] bg-[#666]" />
      </span>
      <IconButton label="Mais zoom" className="mr-[2px] ml-[3px]">
        <Svg w={7} h={7}><path d="M3.500 0v7M0 3.500h7" stroke="#555" strokeWidth="1.800" /></Svg>
      </IconButton>
      <span className="w-9 pr-2 text-right text-[10px]">90%</span>
    </div>
  </footer>
);

export default function App() {
  return (
    <div className="flex min-h-screen flex-col overflow-hidden bg-[#f3f2f1] font-['Noto_Sans',sans-serif]">
      <TitleBar />
      <RibbonTabs />
      <Ribbon />
      <FormulaBar />
      <Sheet />
      <SheetTabs />
      <StatusBar />
      {/* edge of the taskbar */}
      <div className="flex h-0.5 bg-[#2b2b2b]">
        <div className="ml-[45px] h-full w-[328px] bg-[#e6e6e6]" />
      </div>
    </div>
  );
}
